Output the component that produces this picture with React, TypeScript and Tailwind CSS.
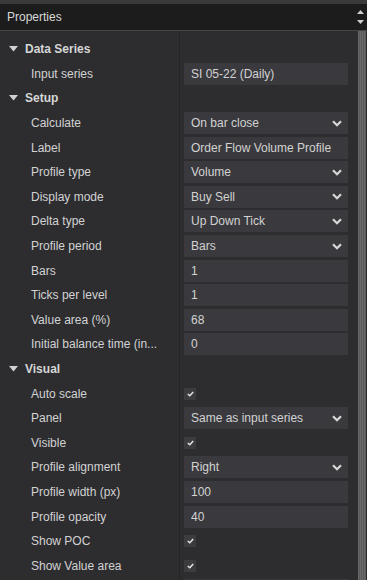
import React from 'react'

type Row =
  | { kind: 'cat'; label: string }
  | { kind: 'text'; label: string; value: string }
  | { kind: 'select'; label: string; value: string }
  | { kind: 'check'; label: string }

const rows: Row[] = [
  { kind: 'cat', label: 'Data Series' },
  { kind: 'text', label: 'Input series', value: 'SI 05-22 (Daily)' },
  { kind: 'cat', label: 'Setup' },
  { kind: 'select', label: 'Calculate', value: 'On bar close' },
  { kind: 'text', label: 'Label', value: 'Order Flow Volume Profile' },
  { kind: 'select', label: 'Profile type', value: 'Volume' },
  { kind: 'select', label: 'Display mode', value: 'Buy Sell' },
  { kind: 'select', label: 'Delta type', value: 'Up Down Tick' },
  { kind: 'select', label: 'Profile period', value: 'Bars' },
  { kind: 'text', label: 'Bars', value: '1' },
  { kind: 'text', label: 'Ticks per level', value: '1' },
  { kind: 'text', label: 'Value area (%)', value: '68' },
  { kind: 'text', label: 'Initial balance time (in...', value: '0' },
  { kind: 'cat', label: 'Visual' },
  { kind: 'check', label: 'Auto scale' },
  { kind: 'select', label: 'Panel', value: 'Same as input series' },
  { kind: 'check', label: 'Visible' },
  { kind: 'select', label: 'Profile alignment', value: 'Right' },
  { kind: 'text', label: 'Profile width (px)', value: '100' },
  { kind: 'text', label: 'Profile opacity', value: '40' },
  { kind: 'check', label: 'Show POC' },
  { kind: 'check', label: 'Show Value area' },
  { kind: 'text', label: '', value: '' },
]

function Chevron() {
  return (
    <svg width="10" height="7" viewBox="0 0 10 7" className="mr-[6px]">
      <path d="M1 1.2 L5 5.2 L9 1.2" stroke="#d8d8d8" strokeWidth="2.2" fill="none" />
    </svg>
  )
}

function Caret() {
  return (
    <svg width="9" height="6" viewBox="0 0 9 6">
      <path d="M0 0 H9 L4.5 5.5 Z" fill="#d0d0d0" />
    </svg>
  )
}

function Check() {
  return (
    <div className="w-[12px] h-[12px] bg-[#3c3c3f] flex items-center justify-center">
      <svg width="7" height="6" viewBox="0 0 7 6">
        <path d="M0.8 3 L2.8 4.8 L6.2 1" stroke="#e4e4e4" strokeWidth="1.5" fill="none" />
      </svg>
    </div>
  )
}

export default function App() {
  return (
    <div
      className="w-[367px] h-[580px] overflow-hidden bg-[#2d2d30] text-[12px] text-[#d2d2d2] flex flex-col"
      style={{ fontFamily: '"Liberation Sans", Arial, sans-serif' }}
    >
      {/* title bar */}
      <div className="h-[4px] bg-[#3a3a3c]" />
      <div className="h-[27px] bg-[#1c1c1d] border-b border-[#444] flex items-center">
        <span className="pl-[7px] flex-1 text-[12px] text-[#d8d8d8]">Properties</span>
        <div className="w-[12px] flex flex-col items-center gap-[6px] pr-[2px]">
          <svg width="7" height="4" viewBox="0 0 7 4"><path d="M0 4 L3.5 0 L7 4 Z" fill="#cfcfcf" /></svg>
          <svg width="7" height="4" viewBox="0 0 7 4"><path d="M0 0 H7 L3.5 4 Z" fill="#cfcfcf" /></svg>
        </div>
      </div>

      <div className="flex flex-1 min-h-0 pt-[6px]">
        <div className="flex-1 relative">
          <div className="absolute left-[179px] -top-[6px] bottom-0 w-px bg-[#242426]" />
          {rows.map((r, i) => {
            if (r.kind === 'cat') {
              return (
                <div key={i} className="h-[24.6px] flex items-center">
                  <div className="w-[25px] flex justify-center pl-[1px]">
                    <Caret />
                  </div>
                  <span className="font-bold text-[#d6d6d6]">{r.label}</span>
                </div>
              )
            }
            return (
              <div key={i} className="h-[24.6px] flex items-center">
                <div className="w-[184px] pl-[31px] whitespace-nowrap overflow-hidden">{r.label}</div>
                <div className="w-[164px] h-[22px] flex items-center">
                  {r.kind === 'check' ? (
                    <Check />
                  ) : (
                    <div className="w-full h-full bg-[#3a3a3e] flex items-center justify-between pl-[7px]">
                      <span className="whitespace-nowrap">{r.value}</span>
                      {r.kind === 'select' && <Chevron />}
                    </div>
                  )}
                </div>
              </div>
            )
          })}
        </div>
        {/* scrollbar */}
        <div className="w-[12px] flex pl-[3px] -mt-[6px]">
          <div className="w-[8px] h-full bg-[repeating-linear-gradient(90deg,#6a6a6a_0px,#6a6a6a_1px,#5a5a5a_1px,#5a5a5a_2px)]" />
        </div>
      </div>
    </div>
  )
}
